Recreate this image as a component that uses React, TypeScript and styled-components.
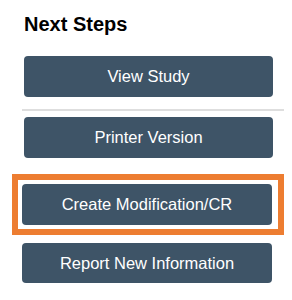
import React from 'react';
import styled, { createGlobalStyle } from 'styled-components';

const GlobalStyle = createGlobalStyle`
  body {
    margin: 0;
    background: #ffffff;
    font-family: "Liberation Sans", Arial, sans-serif;
  }
`;

const Panel = styled.div`
  display: flex;
  flex-direction: column;
  align-items: flex-start;
  padding: 12px 0 0 12px;
  width: 280px;
`;

const Title = styled.h2`
  margin: 0 0 20px 12px;
  font-size: 20px;
  line-height: 24px;
  font-weight: 700;
  color: #000000;
`;

const StepButton = styled.button<{ $offset?: number; $width?: number; $height?: number }>`
  display: flex;
  align-items: center;
  justify-content: center;
  box-sizing: border-box;
  margin: 0 0 0 ${(p) => p.$offset ?? 0}px;
  width: ${(p) => p.$width ?? 250}px;
  height: ${(p) => p.$height ?? 41}px;
  padding: 0;
  border: none;
  border-radius: 4px;
  background-color: #3e5467;
  color: #ffffff;
  font-family: "Liberation Sans", Arial, sans-serif;
  font-size: 16.5px;
  cursor: pointer;
`;

const Divider = styled.hr`
  margin: 12px 0 6px 10px;
  width: 262px;
  height: 2px;
  border: none;
  background-color: #dedede;
`;

const Highlight = styled.div`
  box-sizing: border-box;
  margin: 16px 0 8px 0;
  width: 272px;
  border: 6px solid #ed7d31;
  padding: 4px 6px 4px 4px;
  background: #ffffff;
`;

function App() {
  return (
    <>
      <GlobalStyle />
      <Panel>
        <Title>Next Steps</Title>
        <StepButton $offset={12} $width={249}>View Study</StepButton>
        <Divider />
        <StepButton $offset={12} $width={249}>Printer Version</StepButton>
        <Highlight>
          <StepButton>Create Modification/CR</StepButton>
        </Highlight>
        <StepButton $offset={10} $height={40}>Report New Information</StepButton>
      </Panel>
    </>
  );
}

export default App;
